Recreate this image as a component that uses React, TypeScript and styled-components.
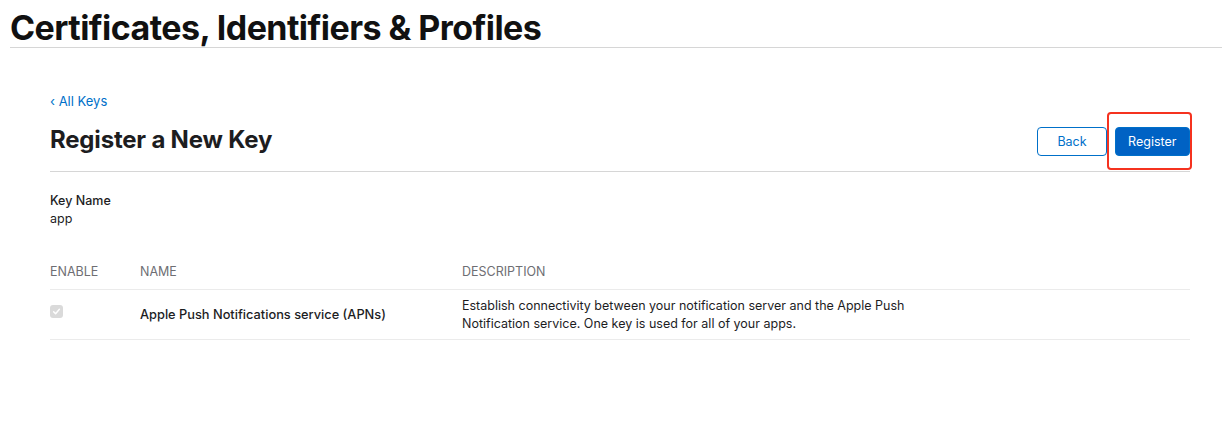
import React from "react";
import styled, { createGlobalStyle } from "styled-components";

const GlobalStyle = createGlobalStyle`
  body {
    margin: 0;
    background: #ffffff;
    font-family: Inter, "Noto Sans", "Liberation Sans", sans-serif;
    color: #1d1d1f;
    -webkit-font-smoothing: antialiased;
  }
`;

const PageHeader = styled.header`
  height: 48px;
  margin-left: 10px;
  padding-top: 6px;
  box-sizing: border-box;
  border-bottom: 1px solid #d6d6d6;
  display: flex;
  align-items: flex-start;
`;

const PageTitle = styled.h1`
  margin: 0;
  font-size: 34px;
  line-height: 44px;
  font-weight: 700;
  letter-spacing: -0.55px;
  color: #111111;
`;

const Content = styled.main`
  padding: 42px 32px 0 50px;
`;

const BackLink = styled.a`
  display: inline-block;
  font-size: 13px;
  line-height: 18px;
  color: #0070c9;
  text-decoration: none;
`;

const TitleBar = styled.div`
  display: flex;
  align-items: center;
  justify-content: space-between;
  height: 61px;
  border-bottom: 1px solid #d6d6d6;
`;

const Heading = styled.h2`
  margin: 0 0 2px;
  font-size: 24px;
  font-weight: 700;
  color: #1d1d1f;
  letter-spacing: -0.2px;
`;

const Actions = styled.div`
  display: flex;
  gap: 8px;
  margin-top: 2px;
`;

const Button = styled.button<{ $primary?: boolean }>`
  height: 29px;
  padding: 0 ${({ $primary }) => ($primary ? "12.5px" : "19px")};
  border-radius: 4px;
  font-family: inherit;
  font-size: 12.5px;
  border: 1px solid #0070c9;
  background: ${({ $primary }) => ($primary ? "#0062c4" : "#ffffff")};
  color: ${({ $primary }) => ($primary ? "#ffffff" : "#0070c9")};
  cursor: pointer;
`;

const Highlight = styled.div`
  position: relative;
  &::after {
    content: "";
    position: absolute;
    left: -8px;
    right: -2px;
    top: -15px;
    bottom: -14px;
    border: 2px solid #f5321f;
    border-radius: 4px;
    pointer-events: none;
  }
`;

const Field = styled.div`
  padding-top: 20px;
  font-size: 12.5px;
  line-height: 18px;
`;

const FieldLabel = styled.div`
  font-weight: 500;
`;

const Table = styled.div`
  margin-top: 26px;
  font-size: 12.5px;
`;

const Row = styled.div<{ $head?: boolean }>`
  display: grid;
  grid-template-columns: 90px 322px 480px;
  align-items: center;
  border-bottom: 1px solid #ebebeb;
  min-height: ${({ $head }) => ($head ? "35px" : "49px")};
  color: ${({ $head }) => ($head ? "#6e6e73" : "#1d1d1f")};
  text-transform: ${({ $head }) => ($head ? "uppercase" : "none")};
  font-size: 12.5px;
`;

const CheckCell = styled.div`
  display: flex;
  align-items: center;
`;

const NameCell = styled.div`
  font-weight: 500;
  font-size: 12.8px;
`;

const DescCell = styled.div`
  line-height: 18px;
`;

const Checkbox = styled.span`
  display: inline-flex;
  align-items: center;
  justify-content: center;
  width: 13px;
  height: 13px;
  border-radius: 3px;
  background: #dadada;
  margin-bottom: 7px;
`;

export default function App() {
  return (
    <>
      <GlobalStyle />
      <PageHeader>
        <PageTitle>Certificates, Identifiers &amp; Profiles</PageTitle>
      </PageHeader>
      <Content>
        <BackLink href="#">‹ All Keys</BackLink>
        <TitleBar>
          <Heading>Register a New Key</Heading>
          <Actions>
            <Button>Back</Button>
            <Highlight>
              <Button $primary>Register</Button>
            </Highlight>
          </Actions>
        </TitleBar>
        <Field>
          <FieldLabel>Key Name</FieldLabel>
          <div>app</div>
        </Field>
        <Table>
          <Row $head>
            <div>Enable</div>
            <div>Name</div>
            <div>Description</div>
          </Row>
          <Row>
            <CheckCell>
              <Checkbox>
                <svg width="9" height="9" viewBox="0 0 10 10">
                  <path d="M1.8 5.2 L4 7.4 L8.2 2.6" fill="none" stroke="#ffffff" strokeWidth="1.6" strokeLinecap="round" strokeLinejoin="round" />
                </svg>
              </Checkbox>
            </CheckCell>
            <NameCell>Apple Push Notifications service (APNs)</NameCell>
            <DescCell>
              Establish connectivity between your notification server and the Apple Push
              Notification service. One key is used for all of your apps.
            </DescCell>
          </Row>
        </Table>
      </Content>
    </>
  );
}
